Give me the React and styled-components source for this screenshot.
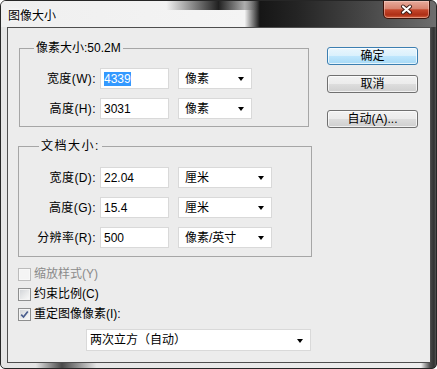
import React from 'react';
import styled, { createGlobalStyle } from 'styled-components';

const GlobalStyle = createGlobalStyle`
    html, body {
        margin: 0;
        padding: 0;
        background: #ffffff;
    }
    body {
        font-family: "Liberation Sans", "Noto Sans CJK SC", sans-serif;
        font-size: 12px;
        color: #000;
    }
`;

const Window = styled.div`
    width: 437px;
    height: 369px;
    box-sizing: border-box;
    border: 1px solid #262626;
    border-radius: 6px 6px 5px 5px;
    overflow: hidden;
    display: flex;
    flex-direction: column;
    background:
        linear-gradient(to right, rgba(0,0,0,0) 0%, rgba(0,0,0,0) 8%, rgba(20,20,20,0.75) 14%, rgba(0,0,0,0) 22%) 0 100% / 100% 6px no-repeat,
        linear-gradient(to right, #e4e4e4 0px, #ededed 420px, #4a4a4a 429px, #333333 433px, #555555 435px);
`;

const TitleBar = styled.div`
    height: 26px;
    flex: none;
    display: flex;
    align-items: flex-start;
    background:
        linear-gradient(to right, rgba(0,0,0,0) 38%, rgba(15,15,15,0.92) 50%, rgba(0,0,0,0) 59%) 0 0 / 100% 9px no-repeat,
        linear-gradient(to right, #efefef 0%, #f4f4f4 56%, #161616 59.5%, #242424 68%, #4a4a4a 85%, #6e6e6e 100%);
`;

const Title = styled.div`
    margin: 8px 0 0 7px;
    line-height: 14px;
    font-size: 12px;
    color: #000;
    text-shadow: 0 0 6px #fff, 0 0 3px #fff;
`;

const CloseButton = styled.div`
    margin-left: auto;
    margin-right: 6px;
    width: 47px;
    height: 18px;
    box-sizing: border-box;
    border: 1px solid #3e1208;
    border-top: none;
    border-radius: 0 0 5px 5px;
    background: linear-gradient(to bottom, #e7ab9c 0%, #d88470 45%, #c4472c 52%, #ae2e15 82%, #d4623f 100%);
    box-shadow: inset 0 0 0 1px rgba(255, 220, 210, 0.45);
    display: flex;
    align-items: center;
    justify-content: center;
`;

const Client = styled.div`
    flex: 1;
    margin: 0 5px 5px 6px;
    border: 1px solid #4e4e4e;
    background: #ececec;
    display: flex;
    padding-left: 10px;
`;

const LeftCol = styled.div`
    width: 294px;
    display: flex;
    flex-direction: column;
`;

const RightCol = styled.div`
    width: 91px;
    margin-left: 15px;
    padding-top: 19px;
    display: flex;
    flex-direction: column;
`;

const Group = styled.div`
    position: relative;
    box-sizing: border-box;
    width: ${(p) => p.$width}px;
    margin-left: ${(p) => p.$offset}px;
    margin-top: ${(p) => p.$top}px;
    border: 1px solid #a6a6a6;
    padding: ${(p) => p.$padTop}px 0 ${(p) => p.$padBottom}px ${(p) => p.$padLeft}px;
    display: flex;
    flex-direction: column;
    gap: 9px;
`;

const Legend = styled.span`
    position: absolute;
    top: -8px;
    left: ${(p) => p.$left}px;
    padding: 0 2px;
    line-height: 14px;
    background: #ececec;
    letter-spacing: ${(p) => p.$spacing || 0}px;
    white-space: nowrap;
`;

const Row = styled.div`
    display: flex;
    align-items: center;
    height: 21px;
`;

const Label = styled.div`
    width: 76px;
    text-align: right;
    line-height: 14px;
    white-space: nowrap;
    letter-spacing: 0.4px;
`;

const Field = styled.div`
    box-sizing: border-box;
    height: 21px;
    width: 69px;
    margin-left: 4px;
    border: 1px solid #d9d9d9;
    background: #fff;
    padding-left: 3px;
    display: flex;
    align-items: center;
    line-height: 14px;
`;

const Selected = styled.span`
    background: #3399ff;
    color: #fff;
`;

const Select = styled.div`
    box-sizing: border-box;
    height: ${(p) => p.$height || 21}px;
    width: ${(p) => p.$width}px;
    margin-left: ${(p) => p.$offset}px;
    margin-top: ${(p) => p.$top || 0}px;
    border: 1px solid #d9d9d9;
    background: #fff;
    padding: 0 7px 0 ${(p) => p.$padLeft || 6}px;
    display: flex;
    align-items: center;
    justify-content: space-between;
    line-height: 14px;
    white-space: nowrap;
`;

const Arrow = styled.span`
    width: 0;
    height: 0;
    border-left: 3.5px solid transparent;
    border-right: 3.5px solid transparent;
    border-top: 4px solid #000;
    margin-top: 1px;
`;

const CheckRow = styled.div`
    display: flex;
    align-items: center;
    height: 20px;
    margin-top: ${(p) => p.$top || 0}px;
    color: ${(p) => (p.$disabled ? '#8a8a8a' : '#000')};
    line-height: 14px;
`;

const Box = styled.span`
    box-sizing: border-box;
    width: 13px;
    height: 13px;
    border: 1px solid ${(p) => (p.$disabled ? '#bcbcbc' : '#8e8f8f')};
    background: ${(p) => (p.$disabled
        ? '#f4f4f4'
        : 'linear-gradient(135deg, #cfd2d6 0%, #e9eaeb 55%, #fbfbfb 100%)')};
    box-shadow: inset 0 0 0 1px ${(p) => (p.$disabled ? '#f8f8f8' : '#f4f4f4')};
    margin-right: 3px;
    display: flex;
    align-items: center;
    justify-content: center;
`;

const Button = styled.div`
    box-sizing: border-box;
    height: 18px;
    width: 91px;
    margin-top: ${(p) => p.$top || 0}px;
    border: 1px solid ${(p) => (p.$primary ? '#3c7fb1' : '#707070')};
    border-radius: 3px;
    background: ${(p) => (p.$primary
        ? 'linear-gradient(to bottom, #eaf6fd 0%, #d9f0fc 50%, #bee6fd 51%, #a7d9f5 100%)'
        : 'linear-gradient(to bottom, #f2f2f2 0%, #ebebeb 50%, #dddddd 51%, #cfcfcf 100%)')};
    box-shadow: inset 0 0 0 1px rgba(255, 255, 255, 0.7);
    display: flex;
    align-items: center;
    justify-content: center;
    line-height: 14px;
`;

const CloseIcon = () => (
    <svg width="13" height="11" viewBox="0 0 13 11">
        <path d="M3 2.5 L10 8.5 M10 2.5 L3 8.5" stroke="#3b1c16" strokeWidth="4" strokeLinecap="round" />
        <path d="M3 2.5 L10 8.5 M10 2.5 L3 8.5" stroke="#ffffff" strokeWidth="2.2" strokeLinecap="round" />
    </svg>
);

const Tick = () => (
    <svg width="9" height="9" viewBox="0 0 9 9">
        <path d="M1.2 4.6 L3.5 7 L7.8 1.4" fill="none" stroke="#4a5e8e" strokeWidth="1.7" />
    </svg>
);

const App = () => (
    <>
        <GlobalStyle />
        <Window>
            <TitleBar>
                <Title>图像大小</Title>
                <CloseButton><CloseIcon /></CloseButton>
            </TitleBar>
            <Client>
                <LeftCol>
                    <Group $width={290} $offset={1} $top={20} $padTop={19} $padBottom={7} $padLeft={0}>
                        <Legend $left={14}>像素大小:50.2M</Legend>
                        <Row>
                            <Label>宽度(W):</Label>
                            <Field><Selected>4339</Selected></Field>
                            <Select $width={74} $offset={9}>像素<Arrow /></Select>
                        </Row>
                        <Row>
                            <Label>高度(H):</Label>
                            <Field>3031</Field>
                            <Select $width={74} $offset={9}>像素<Arrow /></Select>
                        </Row>
                    </Group>

                    <Group $width={294} $offset={0} $top={19} $padTop={20} $padBottom={8} $padLeft={1}>
                        <Legend $left={20} $spacing={1.5}>文档大小:</Legend>
                        <Row>
                            <Label>宽度(D):</Label>
                            <Field>22.04</Field>
                            <Select $width={94} $offset={9}>厘米<Arrow /></Select>
                        </Row>
                        <Row>
                            <Label>高度(G):</Label>
                            <Field>15.4</Field>
                            <Select $width={94} $offset={9}>厘米<Arrow /></Select>
                        </Row>
                        <Row>
                            <Label>分辨率(R):</Label>
                            <Field>500</Field>
                            <Select $width={94} $offset={9}>像素/英寸<Arrow /></Select>
                        </Row>
                    </Group>

                    <CheckRow $top={7} $disabled>
                        <Box $disabled />缩放样式(Y)
                    </CheckRow>
                    <CheckRow>
                        <Box />约束比例(C)
                    </CheckRow>
                    <CheckRow>
                        <Box><Tick /></Box>重定图像像素(I):
                    </CheckRow>

                    <Select $width={225} $offset={68} $top={5} $height={22} $padLeft={3}>
                        两次立方（自动）<Arrow />
                    </Select>
                </LeftCol>

                <RightCol>
                    <Button $primary>确定</Button>
                    <Button $top={10}>取消</Button>
                    <Button $top={17}>自动(A)...</Button>
                </RightCol>
            </Client>
        </Window>
    </>
);

export default App;
